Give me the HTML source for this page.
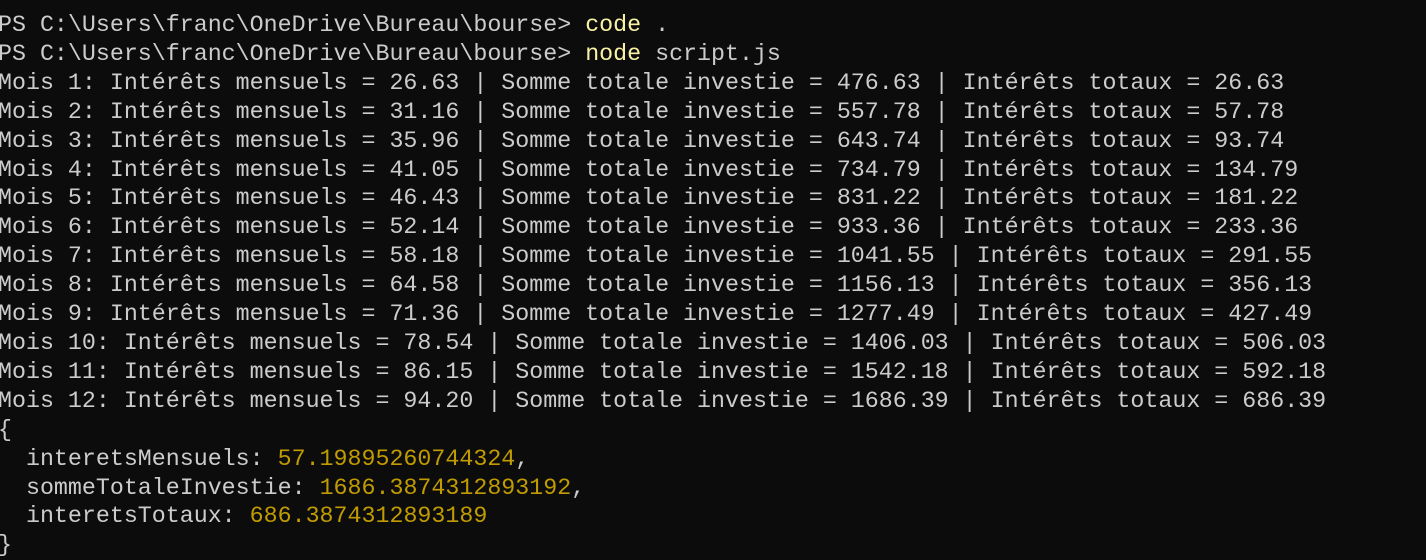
<!DOCTYPE html>
<html><head><meta charset="utf-8"><style>
html,body{margin:0;padding:0;background:#0c0c0c;width:1426px;height:549px;overflow:hidden}
pre{position:absolute;left:-2px;top:11px;margin:0;font-family:"Liberation Mono","DejaVu Sans Mono",monospace;font-size:23.3px;line-height:28.9px;color:#cccccc;white-space:pre}
.y{color:#f9f1a5}.n{color:#c19c00}
</style></head><body><pre>PS C:\Users\franc\OneDrive\Bureau\bourse&gt; <span class="y">code</span> .
PS C:\Users\franc\OneDrive\Bureau\bourse&gt; <span class="y">node</span> script.js
Mois 1: Intérêts mensuels = 26.63 | Somme totale investie = 476.63 | Intérêts totaux = 26.63
Mois 2: Intérêts mensuels = 31.16 | Somme totale investie = 557.78 | Intérêts totaux = 57.78
Mois 3: Intérêts mensuels = 35.96 | Somme totale investie = 643.74 | Intérêts totaux = 93.74
Mois 4: Intérêts mensuels = 41.05 | Somme totale investie = 734.79 | Intérêts totaux = 134.79
Mois 5: Intérêts mensuels = 46.43 | Somme totale investie = 831.22 | Intérêts totaux = 181.22
Mois 6: Intérêts mensuels = 52.14 | Somme totale investie = 933.36 | Intérêts totaux = 233.36
Mois 7: Intérêts mensuels = 58.18 | Somme totale investie = 1041.55 | Intérêts totaux = 291.55
Mois 8: Intérêts mensuels = 64.58 | Somme totale investie = 1156.13 | Intérêts totaux = 356.13
Mois 9: Intérêts mensuels = 71.36 | Somme totale investie = 1277.49 | Intérêts totaux = 427.49
Mois 10: Intérêts mensuels = 78.54 | Somme totale investie = 1406.03 | Intérêts totaux = 506.03
Mois 11: Intérêts mensuels = 86.15 | Somme totale investie = 1542.18 | Intérêts totaux = 592.18
Mois 12: Intérêts mensuels = 94.20 | Somme totale investie = 1686.39 | Intérêts totaux = 686.39
{
  interetsMensuels: <span class="n">57.19895260744324</span>,
  sommeTotaleInvestie: <span class="n">1686.3874312893192</span>,
  interetsTotaux: <span class="n">686.3874312893189</span>
}</pre></body></html>
